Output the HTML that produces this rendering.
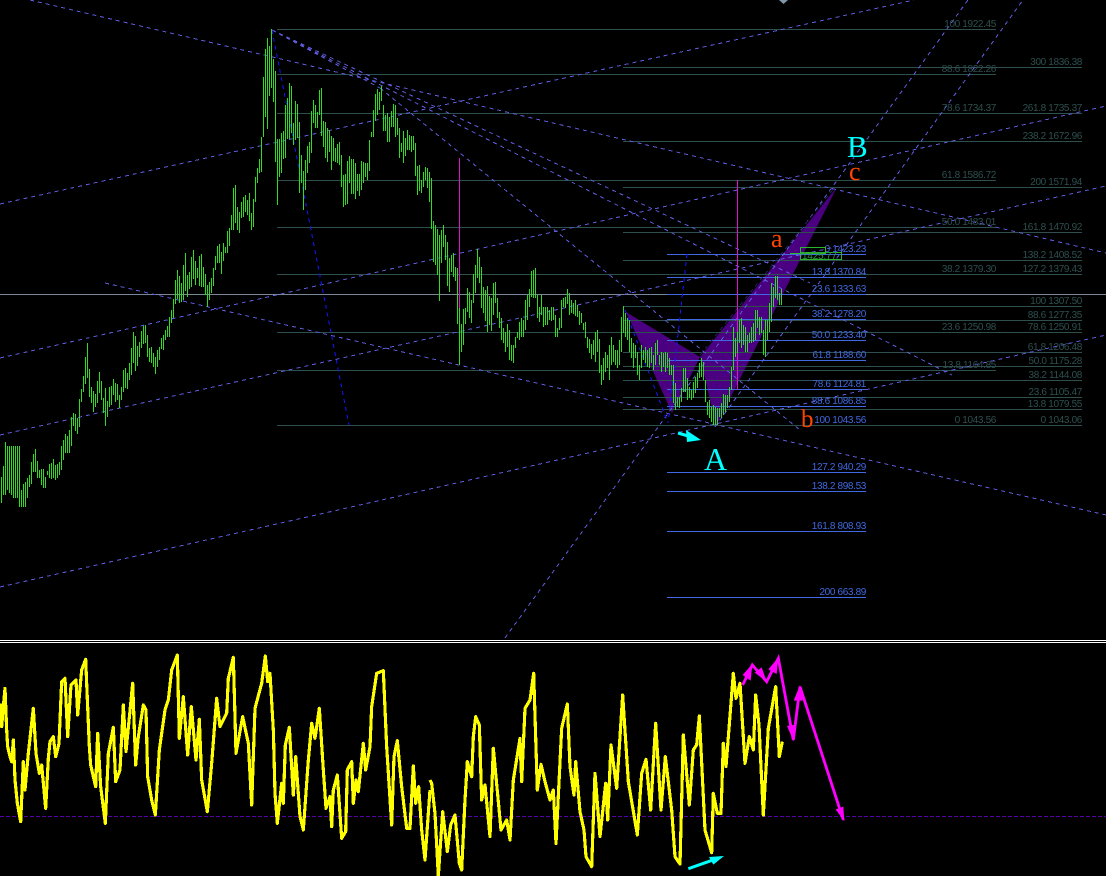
<!DOCTYPE html>
<html><head><meta charset="utf-8"><title>Chart</title>
<style>
html,body{margin:0;padding:0;background:#000;width:1106px;height:876px;overflow:hidden}
svg{display:block}
.s text{fill:#2f4f4f}
.b text{fill:#4169e1}
.s text,.b text{font-family:"Liberation Sans",sans-serif;font-size:10px;letter-spacing:-.35px;text-anchor:end}
.big{font-family:"Liberation Serif",serif}
</style></head><body>
<svg width="1106" height="876" viewBox="0 0 1106 876" xmlns="http://www.w3.org/2000/svg">
<rect width="1106" height="876" fill="#000"/>
<!-- harmonic pattern -->
<polygon points="626,312 672,413 700,357" fill="#4b0082"/>
<polygon points="700,357 716,426 837,187" fill="#4b0082"/>
<!-- grey line -->
<g shape-rendering="crispEdges">
<path d="M0 294.5H1106" stroke="#778899"/>
<!-- slate fib left set -->
<path stroke="#2f4f4f" fill="none" d="M277 29.5H996M277 74.5H996M277 113.5H996M277 180.5H996M277 227.5H996M277 274.5H996M277 332.5H996M277 370.5H996M277 425.5H996"/>
<!-- slate fib right set -->
<path stroke="#2f4f4f" fill="none" d="M623 67.5H1082M623 113.5H1082M623 141.5H1082M623 187.5H1082M623 232.5H1082M623 260.5H1082M623 274.5H1082M623 306.5H1082M623 320.5H1082M623 332.5H1082M623 352.5H1082M623 366.5H1082M623 380.5H1082M623 397.5H1082M623 409.5H1082M623 425.5H1082"/>
<!-- blue fib set -->
<path stroke="#4169e1" fill="none" d="M667 254.5H866M667 277.5H866M667 294.5H866M667 319.5H866M667 340.5H866M667 360.5H866M667 389.5H866M667 406.5H866M667 472.5H866M667 491.5H866M667 531.5H866M667 597.5H866"/>
</g>
<!-- dashed trend lines -->
<g stroke="#5e5cdc" stroke-width="1" stroke-dasharray="4 4" fill="none" shape-rendering="crispEdges">
<line x1="30" y1="0" x2="1106" y2="253"/>
<line x1="272" y1="30" x2="810" y2="283"/>
<line x1="272" y1="30" x2="952" y2="375"/>
<line x1="272" y1="30" x2="380" y2="88"/>
<line x1="380" y1="88" x2="800" y2="430"/>
<line x1="0" y1="204" x2="914" y2="0"/>
<line x1="0" y1="358" x2="1106" y2="106"/>
<line x1="0" y1="435" x2="1106" y2="186"/>
<line x1="0" y1="587" x2="1106" y2="335"/>
<line x1="105" y1="283" x2="1106" y2="515"/>
<line x1="505" y1="638" x2="968" y2="0"/>
<line x1="715" y1="427" x2="1023" y2="0"/>
</g>
<line x1="700" y1="355" x2="835" y2="187" stroke="#20205a" stroke-dasharray="4 4" shape-rendering="crispEdges"/>
<!-- dark blue dashed -->
<g stroke="#1414ff" stroke-dasharray="4 4" fill="none" shape-rendering="crispEdges">
<line x1="272" y1="30" x2="349" y2="425"/>
<line x1="625" y1="310" x2="668" y2="423"/>
<line x1="687" y1="254" x2="668" y2="423"/>
</g>
<!-- magenta verticals -->
<g shape-rendering="crispEdges" stroke="#e010d0">
<path d="M459.5 158V310M737.5 180V390"/>
</g>
<!-- price bars -->
<path shape-rendering="crispEdges" transform="translate(.5 0)" stroke="#2fdc1f" stroke-width="1" fill="none" d="M1 477V503M3 466V495M5 442V495M7 446V490M9 446V493M11 446V495M13 446V498M15 446V498M17 446V498M19 446V507M21 490V507M23 484V507M25 482V507M27 478V498M29 475V487M31 462V484M33 454V472M35 449V472M37 461V478M39 470V478M41 469V485M43 469V488M45 477V488M47 471V475M49 464V478M51 463V479M53 459V478M55 465V480M57 464V478M59 462V475M61 446V470M63 440V460M65 434V453M67 436V453M69 430V453M71 417V446M73 413V426M75 414V431M77 418V434M79 399V427M81 389V402M83 376V392M85 357V384M87 343V378M89 369V397M91 387V403M93 391V412M95 394V407M97 381V403M99 372V393M101 381V400M103 398V413M105 388V426M107 401V417M109 387V407M111 386V405M113 379V395M115 383V402M117 384V400M119 395V408M121 387V400M123 370V392M125 368V388M127 373V389M129 363V380M131 348V375M133 332V363M135 336V371M137 346V366M139 342V357M141 331V348M143 326V344M145 325V343M147 335V357M149 348V362M151 347V363M153 353V367M155 357V374M157 350V367M159 347V360M161 338V349M163 335V350M165 330V340M167 326V337M169 317V337M171 310V323M173 299V318M175 280V304M177 270V299M179 276V303M181 283V302M183 265V300M185 253V291M187 275V297M189 272V289M191 257V287M193 250V279M195 261V285M197 268V278M199 256V286M201 254V287M203 267V287M205 274V295M207 285V307M209 282V300M211 278V293M213 268V286M215 256V270M217 246V263M219 244V263M221 252V274M223 243V261M225 247V253M227 231V253M229 228V246M231 215V230M233 188V230M235 185V223M237 207V230M239 212V233M241 202V218M243 197V217M245 195V212M247 200V215M249 193V221M251 213V230M253 199V227M255 177V202M257 168V183M259 159V173M261 137V172M263 77V137M265 49V117M267 38V129M269 46V96M271 29V88M273 59V102M275 71V162M277 139V205M279 139V177M281 133V173M283 131V159M285 105V158M287 98V139M289 83V139M291 86V133M293 123V145M295 101V140M297 104V138M299 122V193M301 155V183M303 171V210M305 160V190M307 146V173M309 142V163M311 111V153M313 100V123M315 105V128M317 112V128M319 90V115M321 88V136M323 121V147M325 122V158M327 128V162M329 130V152M331 136V170M333 138V161M335 148V162M337 144V163M339 142V165M341 155V187M343 175V207M345 174V205M347 161V204M349 156V183M351 159V194M353 159V194M355 163V199M357 174V191M359 174V196M361 161V190M363 162V183M365 163V177M367 163V180M369 140V171M371 132V137M373 110V137M375 94V121M377 89V115M379 92V110M381 86V101M383 105V131M385 115V131M387 113V142M389 117V142M391 111V127M393 104V127M395 105V137M397 118V135M399 128V158M401 143V152M403 131V163M405 138V156M407 130V150M409 135V150M411 136V152M413 136V150M415 143V176M417 166V195M419 165V191M421 180V193M423 172V187M425 167V180M427 168V188M429 172V202M431 178V229M433 221V262M435 225V265M437 229V275M439 235V301M441 230V263M443 225V247M445 235V260M447 242V286M449 258V292M451 255V272M453 253V277M455 267V281M457 268V324M459 308V365M461 324V352M463 309V345M465 308V324M467 288V312M469 292V318M471 300V323M473 274V303M475 265V293M477 249V278M479 257V283M481 267V308M483 287V313M485 290V321M487 286V332M489 296V325M491 298V331M493 283V315M495 282V303M497 298V318M499 312V328M501 318V340M503 328V343M505 332V352M507 324V347M509 330V360M511 345V361M513 345V363M515 337V348M517 332V338M519 322V340M521 318V337M523 320V337M525 300V330M527 295V320M529 289V307M531 271V297M533 270V298M535 268V298M537 295V318M539 307V322M541 295V315M543 307V327M545 307V325M547 307V325M549 310V320M551 307V321M553 307V320M555 315V337M557 328V337M559 318V330M561 300V328M563 298V307M565 297V308M567 289V304M569 293V315M571 300V313M573 303V314M575 300V316M577 305V317M579 311V325M581 313V323M583 323V330M585 322V338M587 337V348M589 339V353M591 344V359M593 340V355M595 332V362M597 330V352M599 339V373M601 365V385M603 358V380M605 352V372M607 355V368M609 345V380M611 337V365M613 345V362M615 350V365M617 350V368M619 340V365M621 317V352M623 306V333M625 313V337M627 318V340M629 320V352M631 338V358M633 343V368M635 345V358M637 352V375M639 365V380M641 345V368M643 350V360M645 347V363M647 350V367M649 348V368M651 347V363M653 355V370M655 343V365M657 340V355M659 355V365M661 352V372M663 353V367M665 352V372M667 353V368M669 358V375M671 365V375M673 365V403M675 383V410M677 397V407M679 397V408M681 388V402M683 368V392M685 368V392M687 378V400M689 387V398M691 390V400M693 382V398M695 377V393M697 373V388M699 363V378M701 358V377M703 362V380M705 380V402M707 402V415M709 400V418M711 407V422M713 405V425M715 407V425M717 408V425M719 408V417M721 403V418M723 394V415M725 395V412M727 395V408M729 387V402M731 367V390M733 327V370M735 338V357M737 332V353M739 320V343M741 318V348M743 325V345M745 327V352M747 335V352M749 333V343M751 327V343M753 323V342M755 310V340M757 310V328M759 317V335M761 317V333M763 330V355M765 320V357M767 320V340M769 303V332M771 283V322M773 287V307M775 276V298M777 276V300M779 293V305M781 289V305"/>
<!-- fib labels slate -->
<g class="s">
<text x="996" y="27">100 1922.45</text>
<text x="996" y="72">88.6 1822.26</text>
<text x="996" y="111">78.6 1734.37</text>
<text x="996" y="178">61.8 1586.72</text>
<text x="996" y="225">50.0 1483.01</text>
<text x="996" y="272">38.2 1379.30</text>
<text x="996" y="330">23.6 1250.98</text>
<text x="996" y="368">13.8 1164.85</text>
<text x="996" y="423">0 1043.56</text>
<text x="1082" y="65">300 1836.38</text>
<text x="1082" y="111">261.8 1735.37</text>
<text x="1082" y="139">238.2 1672.96</text>
<text x="1082" y="185">200 1571.94</text>
<text x="1082" y="230">161.8 1470.92</text>
<text x="1082" y="258">138.2 1408.52</text>
<text x="1082" y="272">127.2 1379.43</text>
<text x="1082" y="304">100 1307.50</text>
<text x="1082" y="318">88.6 1277.35</text>
<text x="1082" y="330">78.6 1250.91</text>
<text x="1082" y="350">61.8 1206.48</text>
<text x="1082" y="364">50.0 1175.28</text>
<text x="1082" y="378">38.2 1144.08</text>
<text x="1082" y="395">23.6 1105.47</text>
<text x="1082" y="407">13.8 1079.55</text>
<text x="1082" y="423">0 1043.06</text>
</g>
<g class="b">
<text x="866" y="252">0 1423.23</text>
<text x="866" y="275">13.8 1370.84</text>
<text x="866" y="292">23.6 1333.63</text>
<text x="866" y="317">38.2 1278.20</text>
<text x="866" y="338">50.0 1233.40</text>
<text x="866" y="358">61.8 1188.60</text>
<text x="866" y="387">78.6 1124.81</text>
<text x="866" y="404">88.6 1086.85</text>
<text x="866" y="423">100 1043.56</text>
<text x="866" y="470">127.2 940.29</text>
<text x="866" y="489">138.2 898.53</text>
<text x="866" y="529">161.8 808.93</text>
<text x="866" y="595">200 663.89</text>
</g>
<!-- price box -->
<g shape-rendering="crispEdges" fill="none" stroke="#2ab52a">
<path d="M790 253.5H800"/>
<rect x="800.5" y="247.5" width="25" height="6"/>
<rect x="800.5" y="252.5" width="41" height="7"/>
</g>
<text x="802" y="259" font-family="Liberation Sans,sans-serif" font-size="10" letter-spacing="-.2" fill="#2a9a3a">1425.77</text>
<!-- letters -->
<text class="big" x="847" y="157" font-size="31" fill="#00ffff">B</text>
<text class="big" x="704" y="470" font-size="32" fill="#00ffff">A</text>
<text class="big" x="771" y="247" font-size="26" fill="#ff4500">a</text>
<text class="big" x="849" y="180" font-size="26" fill="#ff4500">c</text>
<text class="big" x="801" y="427" font-size="25" fill="#ff4500">b</text>
<!-- cyan arrow upper -->
<line x1="678" y1="433" x2="695" y2="438" stroke="#00ffff" stroke-width="3"/>
<polygon points="701,440 686,430 687,442" fill="#00ffff"/>
<!-- top marker -->
<polygon points="779,0 788,0 783.5,4" fill="#7f97a8"/>
<!-- separators -->
<g shape-rendering="crispEdges" stroke="#fff">
<path d="M0 640.5H1106M0 642.5H1106"/>
</g>
<!-- level -->
<path shape-rendering="crispEdges" d="M0 816.5H1106" stroke="#5500aa" stroke-dasharray="4 2"/>
<!-- oscillator -->
<g fill="none" stroke="#ffff00" stroke-width="9.5" stroke-linejoin="round" shape-rendering="crispEdges">
<path transform="translate(0 630) scale(.33333)" d="M2 220L5 290L10 230L15 175L20 300L23 350L30 380L35 395L40 330L45 450L52 520L62 575L70 395L75 480L85 370L100 235L108 370L118 430L125 405L137 535L145 385L150 335L160 320L167 380L177 340L185 155L195 145L203 320L213 165L228 150L233 255L245 120L257 88L268 350L272 405L287 470L293 310L302 470L316 580L325 370L340 292L347 455L360 420L370 225L378 365L398 160L407 405L415 320L430 225L438 240L443 440L455 510L466 555L478 360L495 240L505 210L515 120L532 75L538 325L550 200L563 375L574 230L588 390L598 268L605 450L622 545L635 400L650 205L660 290L680 250L685 145L700 82L708 370L728 260L745 340L755 525L765 235L785 160L796 78L803 155L810 130L820 300L825 490L832 580L845 460L850 520L856 345L868 292L880 495L887 380L900 560L910 600L925 390L935 280L945 325L958 235L970 420L978 535L990 500L995 590L1000 480L1012 435L1025 625L1037 605L1042 420L1055 395L1060 520L1068 450L1075 485L1090 340L1097 420L1110 350L1115 230L1130 130L1150 122L1160 350L1175 585L1182 380L1192 332L1205 470L1220 595L1230 595L1240 408L1247 520L1256 470L1265 600L1275 690L1290 480"/>
<path transform="translate(430 630) scale(.33333)" d="M0 450L5 460L15 550L25 738L38 545L52 665L62 585L75 555L88 700L95 720L105 510L112 395L125 440L130 320L137 260L148 285L155 510L165 465L180 620L190 355L205 515L213 600L230 570L240 630L250 450L270 325L275 455L285 235L300 210L311 130L322 480L333 403L345 455L360 510L370 480L378 640L395 295L412 222L420 410L432 495L437 395L450 545L462 600L468 680L485 710L495 430L510 620L527 460L533 570L543 345L560 475L578 195L595 455L622 615L635 430L648 388L662 540L677 280L693 540L706 380L725 540L735 680L750 702L760 315L778 525L790 360L800 345L808 258L825 600L845 668L850 490L862 550L873 550L880 340L888 410L910 130L918 205L930 160L945 400L958 320L970 360L977 195L987 285L1000 555L1015 295L1037 170L1048 380L1057 335"/>
</g>
<!-- arrows lower panel -->
<g transform="translate(430 630) scale(.33333)">
<g fill="none" stroke="#ff00ff" stroke-width="8.5">
<path d="M938 165L967 105L1010 155L1045 85L1090 330L1110 170L1240 570"/>
</g>
<g fill="#ff00ff">
<polygon points="967,102 938,135 962,152"/>
<polygon points="1010,155 974,128 995,112"/>
<polygon points="1045,82 1015,118 1040,132"/>
<polygon points="1091,334 1071,288 1098,284"/>
<polygon points="1110,165 1091,212 1118,212"/>
<polygon points="1243,574 1217,538 1240,530"/>
</g>
<line x1="775" y1="716" x2="860" y2="686" stroke="#00ffff" stroke-width="9"/>
<polygon points="882,678 837,681 850,704" fill="#00ffff"/>
</g>
</svg>
</body></html>
